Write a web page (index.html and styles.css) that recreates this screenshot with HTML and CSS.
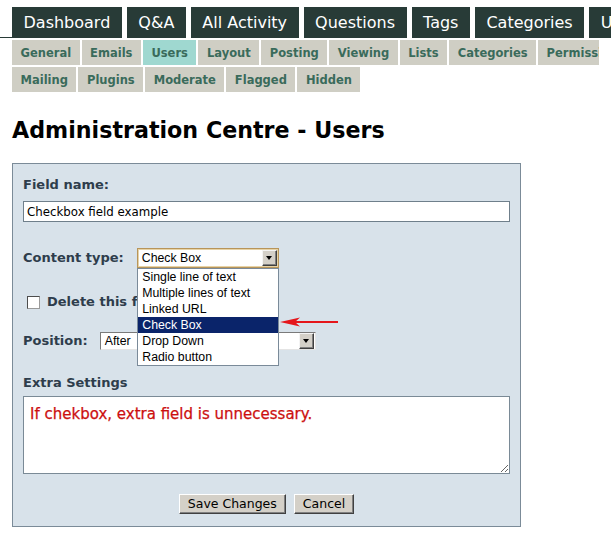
FILE: index.html
```html
<!DOCTYPE html>
<html lang="en">
<head>
<meta charset="utf-8">
<title>Administration Centre - Users</title>
<link rel="stylesheet" href="styles.css">
</head>
<body>
<nav class="topnav">
  <a class="tab" href="#">Dashboard</a>
  <a class="tab" href="#">Q&amp;A</a>
  <a class="tab" href="#">All Activity</a>
  <a class="tab" href="#">Questions</a>
  <a class="tab" href="#">Tags</a>
  <a class="tab" href="#">Categories</a>
  <a class="tab" href="#">Users</a>
  <a class="tab" href="#">Admin</a>
</nav>

<main class="main">
  <nav class="subnav">
    <div class="subrow">
      <a class="subtab" href="#">General</a>
      <a class="subtab" href="#">Emails</a>
      <a class="subtab active" href="#">Users</a>
      <a class="subtab" href="#">Layout</a>
      <a class="subtab" href="#">Posting</a>
      <a class="subtab" href="#">Viewing</a>
      <a class="subtab" href="#">Lists</a>
      <a class="subtab" href="#">Categories</a>
      <a class="subtab" href="#">Permissions</a>
      <a class="subtab" href="#">Pages</a>
    </div>
    <div class="subrow">
      <a class="subtab" href="#">Mailing</a>
      <a class="subtab" href="#">Plugins</a>
      <a class="subtab" href="#">Moderate</a>
      <a class="subtab" href="#">Flagged</a>
      <a class="subtab" href="#">Hidden</a>
    </div>
  </nav>

  <h1 class="title">Administration Centre - Users</h1>

  <form class="panel">
    <div class="label">Field name:</div>
    <input class="text-input" type="text" value="Checkbox field example">

    <div class="field-row type-row">
      <span class="label">Content type:</span>
      <div class="select select-focus">
        <span class="select-value">Check Box</span>
        <span class="select-btn"><span class="caret"></span></span>
        <ul class="options">
          <li>Single line of text</li>
          <li>Multiple lines of text</li>
          <li>Linked URL</li>
          <li class="selected">Check Box</li>
          <li>Drop Down</li>
          <li>Radio button</li>
        </ul>
        <svg class="pointer" width="62" height="12" viewBox="0 0 62 12">
          <line x1="14" y1="6" x2="59" y2="6" stroke="#e5161b" stroke-width="2"/>
          <polygon points="1,6 21,1.5 16,6 21,10.5" fill="#e5161b"/>
        </svg>
      </div>
    </div>

    <label class="check-row">
      <input class="check" type="checkbox">
      <span class="label">Delete this field</span>
    </label>

    <div class="field-row pos-row">
      <span class="label">Position:</span>
      <div class="select select-pos">
        <span class="select-value">After</span>
        <span class="select-btn"><span class="caret"></span></span>
      </div>
    </div>

    <div class="label extra-label">Extra Settings</div>
    <textarea class="extra" readonly>If chekbox, extra field is unnecessary.</textarea>

    <div class="actions">
      <button class="btn" type="button">Save Changes</button>
      <button class="btn" type="button">Cancel</button>
    </div>
  </form>
</main>
</body>
</html>
```

FILE: styles.css
```css
* {
  box-sizing: border-box;
}

html,
body {
  margin: 0;
  background: #fff;
}

body {
  font-family: "DejaVu Sans", Verdana, sans-serif;
  overflow: hidden;
}

/* top tab bar */
.topnav {
  display: flex;
  align-items: flex-end;
  margin-top: 7px;
  overflow: hidden;
  white-space: nowrap;
}

.topnav::before {
  content: "";
  flex: 0 0 12px;
  height: 2px;
  margin-bottom: -1px;
  background: #283b37;
}

.tab {
  flex: none;
  height: 31px;
  padding: 1px 11.5px 0;
  line-height: 30px;
  font-size: 16px;
  color: #fff;
  background: #283b37;
  text-decoration: none;
}

.tab + .tab {
  margin-left: 5px;
}

.main {
  padding: 0 12px;
}

/* admin sub tabs */
.subnav {
  display: flex;
  flex-direction: column;
  gap: 2px;
  margin-top: 2px;
  overflow: hidden;
}

.subrow {
  display: flex;
  gap: 2px;
  white-space: nowrap;
}

.subtab {
  flex: none;
  height: 25px;
  padding: 1px 8.5px 0;
  line-height: 24px;
  font-size: 11.5px;
  font-weight: bold;
  color: #3a6b5b;
  background: #cfcec4;
  text-decoration: none;
}

.subtab.active {
  background: #9fd8d0;
}

.title {
  margin: 25px 0 0;
  font-size: 22.2px;
  line-height: 26px;
  font-weight: bold;
  color: #000;
}

/* form panel */
.panel {
  display: flex;
  flex-direction: column;
  width: 509px;
  margin: 20px 0 0;
  padding: 13px 10px 12px;
  background: #d8e2ea;
  border: 1px solid #7b8b98;
}

.label {
  font-size: 13px;
  line-height: 16px;
  font-weight: bold;
  color: #2e3d4c;
}

.text-input {
  width: 100%;
  height: 21px;
  margin: 8px 0 0;
  padding: 0 3px;
  border: 1px solid #6f7f8b;
  background: #fff;
  font-family: "DejaVu Sans", Verdana, sans-serif;
  font-size: 11.8px;
  color: #000;
  outline: none;
}

.field-row {
  display: flex;
  align-items: center;
  gap: 13px;
}

.type-row {
  margin-top: 26px;
}

.pos-row {
  margin-top: 22px;
  gap: 12px;
}

/* drop-down boxes */
.select {
  position: relative;
  display: flex;
  align-items: center;
  background: #fff;
  font-family: "Liberation Sans", Arial, sans-serif;
  font-size: 12.3px;
  color: #000;
}

.select-value {
  flex: 1;
  padding-left: 4px;
  white-space: nowrap;
  overflow: hidden;
}

.select-focus {
  width: 142px;
  height: 20px;
  border: 1px solid #b8955a;
  box-shadow: inset 0 0 0 1px #e7d3a6;
}

.select-pos {
  width: 216px;
  height: 18px;
  border: 1px solid;
  border-color: #7a7a7a #e4e4e4 #e4e4e4 #7a7a7a;
}

.select-btn {
  flex: none;
  display: flex;
  align-items: center;
  justify-content: center;
  width: 15px;
  height: 16px;
  margin-right: 1px;
  background: #d4d0c8;
  border: 1px solid;
  border-color: #f4f4f4 #404040 #404040 #f4f4f4;
  box-shadow: inset -1px -1px 0 #808080;
}

.caret {
  width: 0;
  height: 0;
  border-left: 3.5px solid transparent;
  border-right: 3.5px solid transparent;
  border-top: 4px solid #000;
}

.options {
  position: absolute;
  top: calc(100% + 1px);
  left: -1px;
  z-index: 2;
  width: 142px;
  margin: 0;
  padding: 0;
  list-style: none;
  background: #fff;
  border: 1px solid #7a8a99;
}

.options li {
  height: 16px;
  padding-left: 4.5px;
  line-height: 16px;
  white-space: nowrap;
}

.options .selected {
  background: #0a246a;
  color: #fff;
}

.pointer {
  position: absolute;
  top: 67px;
  left: calc(100% + 1px);
  z-index: 3;
}

/* delete checkbox */
.check-row {
  display: flex;
  align-items: center;
  gap: 7px;
  margin-top: 26px;
  padding-left: 4px;
}

.check {
  appearance: none;
  -webkit-appearance: none;
  width: 13px;
  height: 13px;
  margin: 0;
  background: #fff;
  border: 1px solid #4d4d4d;
  border-right-color: #9a9a9a;
  border-bottom-color: #9a9a9a;
}

.extra-label {
  margin-top: 25px;
}

.extra {
  display: block;
  width: 100%;
  height: 78px;
  margin: 5px 0 0;
  padding: 8px 6px;
  border: 1px solid #7a8a96;
  background: #fff;
  font-family: "DejaVu Sans", Verdana, sans-serif;
  font-size: 15px;
  line-height: 18px;
  font-weight: normal;
  color: #cc0f0f;
  -webkit-text-stroke: 0.25px #cc0f0f;
  resize: vertical;
  outline: none;
}

/* buttons */
.actions {
  display: flex;
  justify-content: center;
  gap: 8px;
  margin-top: 20px;
}

.btn {
  height: 20px;
  padding: 0 8px;
  font-family: "DejaVu Sans", Verdana, sans-serif;
  font-size: 12.5px;
  line-height: 18px;
  color: #000;
  background: #d4d0c8;
  border: 1px solid;
  border-color: #fff #404040 #404040 #fff;
  box-shadow: inset -1px -1px 0 #808080;
  border-radius: 0;
}
```
